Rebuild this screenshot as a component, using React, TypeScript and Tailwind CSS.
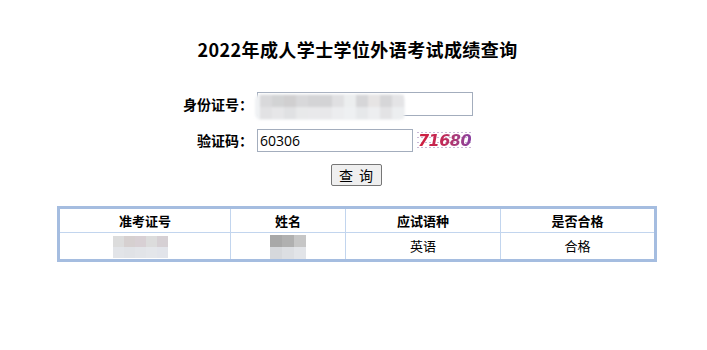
import React from "react";

const cjk = "font-['Noto_Sans_CJK_SC','Noto_Sans',sans-serif]";

function Pixels({ cells, cols, size }: { cells: string[]; cols: number; size: number }) {
    return (
        <div
            className="grid"
            style={{ gridTemplateColumns: `repeat(${cols}, ${size}px)`, gridAutoRows: `${size}px` }}
        >
            {cells.map((c, i) => (
                <div key={i} style={{ background: c }} />
            ))}
        </div>
    );
}

const idCells = [
    "#d9d9db", "#d2d3d4", "#d0cfd0", "#d8d8da", "#d4d4d6", "#d3d3d5", "#e0e0e2", "#eceeef", "#d6d6d8", "#e6e4e4", "#d6d6d8", "#e4e4e6",
    "#e2e2e4", "#e6e6e8", "#e0e1e3", "#e8e9ea", "#e9e9eb", "#e8e8ea", "#ecedef", "#eef0f2", "#e6e8ea", "#edeef0", "#e3e3e5", "#eceef0",
];

const examCells = [
    "#dcdcdc", "#d6d0d0", "#d8d0d4", "#dcdcdc", "#d6d0d4",
    "#e2e4e8", "#e0e2e6", "#e2e4e8", "#e4e6ea", "#e2e4ea",
];

const nameCells = ["#a8a8a8", "#b0b0b0", "#c6c6c6", "#d6d8dc", "#dcdee2", "#e2e4e8"];

export default function App() {
    return (
        <main className={`min-h-[350px] w-[707px] bg-white text-black ${cjk}`}>
            <h1 className="pt-[36px] pl-[8px] text-center text-[18px] leading-[27px] font-bold tracking-[0.4px]">
                2022年成人学士学位外语考试成绩查询
            </h1>

            {/* 查询表单 */}
            <div className="mt-[29px] ml-[178px] grid grid-cols-[75px_auto] items-center gap-x-[4px] gap-y-[13px]">
                <label className="text-right text-[14px] font-bold">身份证号：</label>
                <div className="relative h-[24px] w-[216px] border border-[#a3adbd] bg-white">
                    <div className="absolute -left-[3px] top-[1px] rounded-[6px] bg-[#f0f2f4] p-[1px] pl-[5px] blur-[1px]">
                        <Pixels cells={idCells} cols={12} size={12} />
                    </div>
                </div>

                <label className="text-right text-[14px] font-bold">验证码：</label>
                <div className="flex items-center gap-[3px]">
                    <input
                        defaultValue="60306"
                        className="h-[23px] w-[156px] border border-[#a3adbd] px-[2px] text-[14px] outline-none font-['Open_Sans','Noto_Sans',sans-serif]"
                    />
                    <span className="h-[22px] w-[57px] flex items-center justify-center bg-[radial-gradient(#c9b8d6_0.6px,transparent_0.8px)] bg-[length:4px_5px]">
                        <span className="bg-gradient-to-r from-[#d01c3c] via-[#c02a5a] to-[#8a3fa0] bg-clip-text text-[16px] font-bold italic text-transparent font-['DejaVu_Sans',sans-serif] tracking-[-0.5px]">
                            71680
                        </span>
                    </span>
                </div>
            </div>

            <div className="mt-[12px] flex justify-center pl-[6px]">
                <button className="h-[22px] w-[51px] rounded-[2px] border border-[#767676] bg-[#efefef] text-[14px] leading-none tracking-[6px] pl-[5px]">
                    查询
                </button>
            </div>

            {/* 成绩表 */}
            <table className="ml-[57px] mt-[20px] w-[600px] border-collapse border-[3px] border-[#a5bde0] text-[13px]">
                <thead>
                    <tr className="h-[25px]">
                        <th className="w-[172px] border border-[#c2d5ee] font-bold">准考证号</th>
                        <th className="w-[115px] border border-[#c2d5ee] font-bold">姓名</th>
                        <th className="w-[155px] border border-[#c2d5ee] font-bold">应试语种</th>
                        <th className="border border-[#c2d5ee] font-bold">是否合格</th>
                    </tr>
                </thead>
                <tbody>
                    <tr className="h-[25px]">
                        <td className="border border-[#c2d5ee]">
                            <div className="flex justify-center pt-[2px] pr-[10px] blur-[0.6px]">
                                <Pixels cells={examCells} cols={5} size={11} />
                            </div>
                        </td>
                        <td className="border border-[#c2d5ee]">
                            <div className="flex justify-center pt-[2px] blur-[0.6px]">
                                <Pixels cells={nameCells} cols={3} size={12} />
                            </div>
                        </td>
                        <td className="border border-[#c2d5ee] text-center">英语</td>
                        <td className="border border-[#c2d5ee] text-center">合格</td>
                    </tr>
                </tbody>
            </table>
        </main>
    );
}
